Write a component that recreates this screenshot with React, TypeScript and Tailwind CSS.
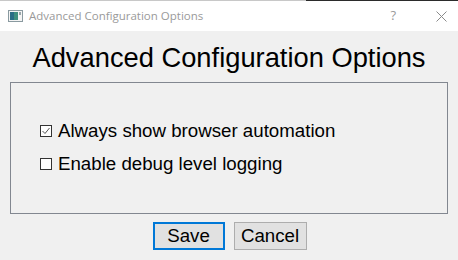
export default function App() {
  return (
    <div className="w-[458px] h-[260px] overflow-hidden bg-[#f0f0f0] flex flex-col font-['Liberation_Sans',Arial,sans-serif]">
      <div className="h-[1px] flex shrink-0">
        <div className="w-[306px] bg-[#c8c8c8]" />
        <div className="flex-1 bg-[#2b2b2b]" />
      </div>
      <div className="h-[30px] shrink-0 bg-white flex items-center">
        <svg width="15" height="12" viewBox="0 0 15 12" className="ml-[8px]">
          <rect x="0.5" y="0.5" width="14" height="11" fill="#f4f4f4" stroke="#8a9aa0" />
          <rect x="2" y="2" width="8" height="8" fill="#3f8f7f" />
          <rect x="2" y="2" width="4" height="8" fill="#2a6d86" />
          <rect x="11" y="2" width="2" height="3" fill="#9aa6aa" />
        </svg>
        <span className="ml-[6px] text-[11.5px] text-[#9a9a9a] font-['Open_Sans','Noto_Sans',sans-serif]">
          Advanced Configuration Options
        </span>
        <span className="ml-auto mr-[40px] text-[13px] text-[#9a9a9a] font-['Open_Sans',sans-serif]">?</span>
        <svg width="11" height="11" viewBox="0 0 11 11" className="mr-[11px]">
          <path d="M0.5 0.5 L10.5 10.5 M10.5 0.5 L0.5 10.5" stroke="#8a8a8a" strokeWidth="1" />
        </svg>
      </div>
      <div className="flex flex-col items-center">
        <h1 className="mt-[11px] text-[27.3px] leading-[31px] text-black">Advanced Configuration Options</h1>
        <div className="mt-[9px] w-[438px] h-[132px] border border-[#828790] self-start ml-[10px] flex flex-col pt-[37px] pl-[29px] gap-[11px]">
          <label className="flex items-center gap-[6px] text-[18.7px] leading-[22px] text-black">
            <svg width="12" height="12" viewBox="0 0 12 12">
              <rect x="0.5" y="0.5" width="11" height="11" fill="white" stroke="#333" />
              <path d="M2.5 6 L5 8.5 L9.5 3" fill="none" stroke="#555" strokeWidth="1" />
            </svg>
            Always show browser automation
          </label>
          <label className="flex items-center gap-[6px] text-[18.7px] leading-[22px] text-black">
            <svg width="12" height="12" viewBox="0 0 12 12">
              <rect x="0.5" y="0.5" width="11" height="11" fill="white" stroke="#333" />
            </svg>
            Enable debug level logging
          </label>
        </div>
        <div className="mt-[8px] flex gap-[9px] ml-[1px]">
          <button className="w-[72px] h-[28px] border-2 border-[#0078d7] bg-[#e1e1e1] text-[18.7px] leading-[22px] text-black">Save</button>
          <button className="w-[73px] h-[28px] border border-[#adadad] bg-[#e1e1e1] text-[18.7px] leading-[22px] text-black">Cancel</button>
        </div>
      </div>
    </div>
  )
}
